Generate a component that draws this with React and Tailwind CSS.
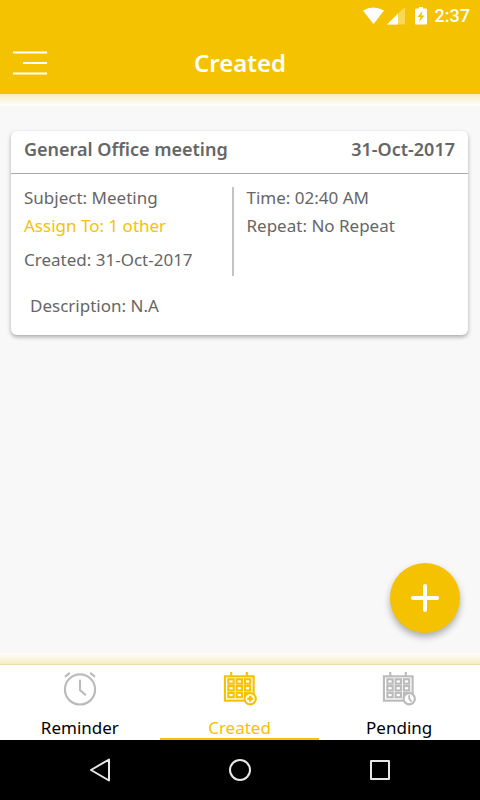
import React from "react";

function StatusBar() {
  return (
    <div className="flex h-8 items-center justify-end pr-2.5 text-white">
      <svg className="mr-0.5 h-5 w-6" viewBox="0 0 24 20" fill="currentColor" aria-hidden="true">
        <path d="M2 4.500Q12-1.500 23 4.500L13 17.500Q12.500 18 12 17.500Z" />
      </svg>
      <svg className="mr-2.5 h-[18px] w-[18px]" viewBox="0 0 18 18" fill="currentColor" aria-hidden="true">
        <path d="M18 0V17.500H0Z" opacity=".35" />
        <path d="M11 6.500V17.500H0Z" />
      </svg>
      <svg className="mr-2 h-[18px] w-3" viewBox="0 0 12 18" fill="currentColor" aria-hidden="true">
        <path
          fillRule="evenodd"
          d="M4 0H8V1.500H11Q12 1.500 12 2.500V16.500Q12 17.500 11 17.500H1Q0 17.500 0 16.500V2.500Q0 1.500 1 1.500H4ZM7.500 4L2.500 10H5.500L4 15L9.500 8.500H6.500Z"
        />
      </svg>
      <span className="font-['Roboto',sans-serif] text-lg font-medium leading-6">2:37</span>
    </div>
  );
}

function Field({ label, value, className = "" }) {
  return (
    <p className={className}>
      {label}: {value}
    </p>
  );
}

function AlarmIcon() {
  return (
    <svg className="size-9" viewBox="0 0 36 36" fill="none" stroke="#bbb" strokeWidth="2.200" aria-hidden="true">
      <circle cx="18" cy="19" r="15.500" />
      <path d="M18 9V19.500L24 25" />
      <path d="M2.500 6L7.500 2M28.500 2L33.500 6" />
    </svg>
  );
}

function CalendarIcon({ color, badge }) {
  return (
    <svg className="size-9" viewBox="0 0 36 36" fill="none" stroke={color} strokeWidth="2.200" aria-hidden="true">
      <path d="M9 1V6M25 1V6" />
      <rect x="2.500" y="5.500" width="29.500" height="25" />
      {[8.5, 15.5, 22.5].map((y) =>
        [6, 14.5, 23].map((x) => <rect key={`${x}-${y}`} x={x} y={y} width="5.500" height="4.500" />)
      )}
      <circle cx="28.500" cy="28.500" r="5.800" fill="#fff" />
      {badge === "plus" ? (
        <path d="M28.500 25.500V31.500M25.500 28.500H31.500" strokeWidth="2.600" />
      ) : (
        <path d="M28.500 25V28.500L31 31.500" strokeWidth="1.800" />
      )}
    </svg>
  );
}

function Tab({ label, active, children }) {
  return (
    <button
      type="button"
      role="tab"
      aria-selected={Boolean(active)}
      className={
        "flex h-full flex-1 flex-col items-center border-b-2 pt-1.5 text-[17px] leading-5 " +
        (active ? "border-[#f5c200] text-[#f5c200]" : "border-transparent text-black")
      }
    >
      {children}
      <span className="mt-3">{label}</span>
    </button>
  );
}

export default function App() {
  return (
    <div className="flex min-h-screen flex-col bg-[#f8f8f8] font-['Noto_Sans',sans-serif] text-[#666]">
      <header className="bg-[#f5c200]">
        <StatusBar />
        <div className="grid h-[62px] grid-cols-[1fr_auto_1fr] items-center px-3">
          <button type="button" aria-label="Menu" className="w-9 text-white">
            <svg className="h-6 w-9" viewBox="0 0 36 24" fill="none" stroke="currentColor" strokeWidth="2" aria-hidden="true">
              <path d="M1 1.500H35M11 12H35M1 22.500H35" />
            </svg>
          </button>
          <h1 className="text-2xl font-semibold text-white">Created</h1>
        </div>
      </header>
      <div className="h-3 bg-linear-to-b from-[#f7ecc2] to-white" />

      <main className="flex flex-1 flex-col pl-[11px] pr-3 pt-[25px]">
        <article className="rounded-md bg-white text-[17px] leading-7 shadow-[0_2px_4px_rgba(0,0,0,0.32)]">
          <div className="flex h-[43px] items-center justify-between border-b border-[#aaa] px-[13px] pb-1.5 text-lg font-semibold">
            <h2>General Office meeting</h2>
            <time dateTime="2017-10-31">31-Oct-2017</time>
          </div>
          <div className="grid grid-cols-2 pt-[13px]">
            <div className="mr-1.5 h-[89px] border-r-2 border-[#c4c4c4] pl-[13px]">
              <Field label="Subject" value="Meeting" className="-mt-[3px]" />
              <Field label="Assign To" value="1 other" className="text-[#f5c200]" />
              <Field label="Created" value="31-Oct-2017" className="mt-1.5" />
            </div>
            <div className="pl-[7px]">
              <Field label="Time" value="02:40 AM" className="-mt-[3px]" />
              <Field label="Repeat" value="No Repeat" />
            </div>
          </div>
          <Field label="Description" value="N.A" className="px-[19px] pb-[15px] pt-4" />
        </article>
        <button
          type="button"
          aria-label="Add"
          className="mb-5 mr-2 mt-auto flex size-[70px] items-center justify-center self-end rounded-full bg-[#f5c200] text-white shadow-[0_4px_7px_rgba(0,0,0,0.3)]"
        >
          <svg className="size-7" viewBox="0 0 28 28" stroke="currentColor" strokeWidth="4" strokeLinecap="round" aria-hidden="true">
            <path d="M14 2V26M2 14H26" />
          </svg>
        </button>
      </main>

      <div className="h-3 border-b border-[#e8dcae] bg-linear-to-b from-white to-[#f7ecc2]" />
      <nav role="tablist" aria-label="Lists" className="flex h-[75px] bg-white pr-px">
        <Tab label="Reminder">
          <AlarmIcon />
        </Tab>
        <Tab label="Created" active>
          <CalendarIcon color="#f5c200" badge="plus" />
        </Tab>
        <Tab label="Pending">
          <CalendarIcon color="#bbb" badge="clock" />
        </Tab>
      </nav>
      <div className="flex h-[60px] items-center justify-between bg-black px-[88px] text-[#e8e8e8]">
        <button type="button" aria-label="Back">
          <svg className="size-6" viewBox="0 0 24 24" fill="none" stroke="currentColor" strokeWidth="2" strokeLinejoin="round" aria-hidden="true">
            <path d="M21 1.500V22.500L3 12Z" />
          </svg>
        </button>
        <button type="button" aria-label="Home">
          <svg className="size-6" viewBox="0 0 24 24" fill="none" stroke="currentColor" strokeWidth="2" aria-hidden="true">
            <circle cx="12" cy="12" r="10" />
          </svg>
        </button>
        <button type="button" aria-label="Recent apps">
          <svg className="size-6" viewBox="0 0 24 24" fill="none" stroke="currentColor" strokeWidth="2" strokeLinejoin="round" aria-hidden="true">
            <rect x="3" y="3" width="18" height="18" />
          </svg>
        </button>
      </div>
    </div>
  );
}
